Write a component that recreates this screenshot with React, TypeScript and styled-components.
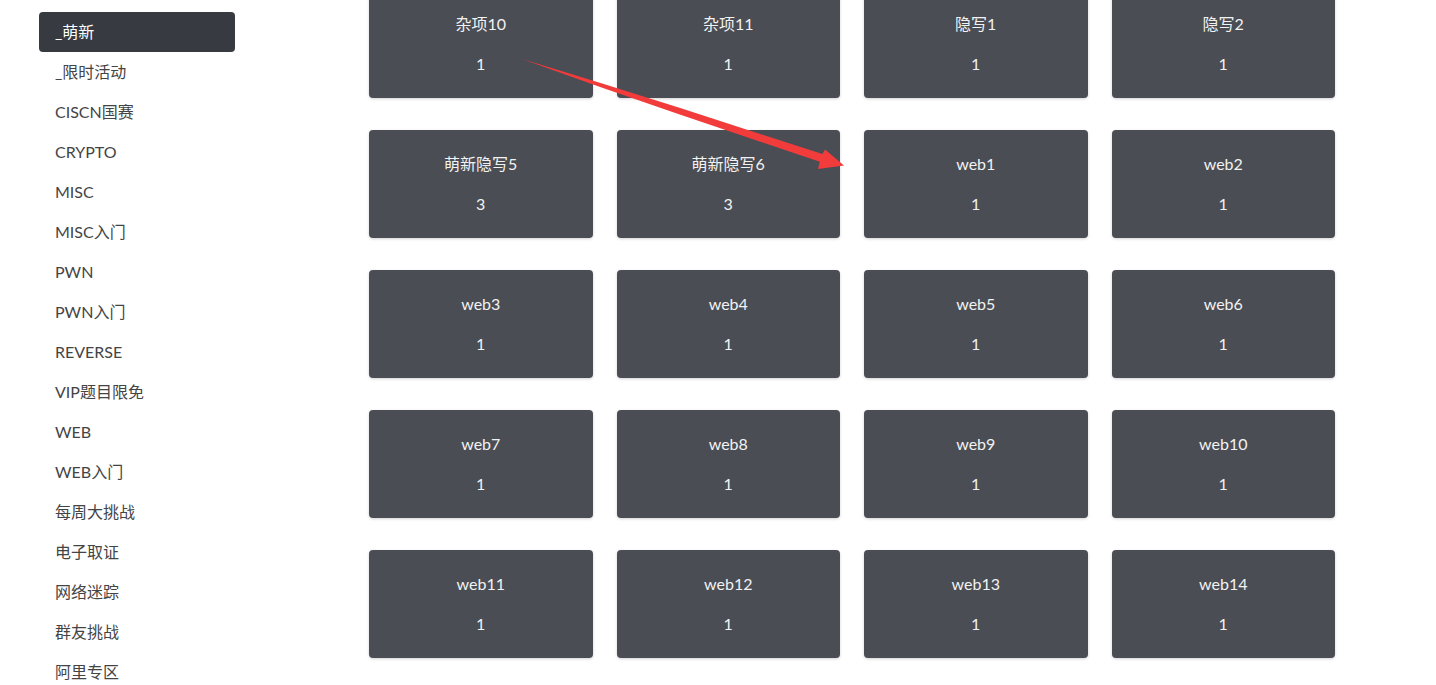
import styled, { createGlobalStyle } from 'styled-components';

const GlobalStyle = createGlobalStyle`
  html, body {
    margin: 0;
    padding: 0;
    background: #fff;
    overflow: hidden;
  }
  body {
    font-family: Lato, "Noto Sans CJK SC", sans-serif;
  }
`;

const Page = styled.div`
  position: relative;
  display: flex;
  align-items: flex-start;
  height: 685px;
  overflow: hidden;
`;

const Sidebar = styled.nav`
  display: flex;
  flex-direction: column;
  width: 196px;
  margin: 12px 0 0 39px;
  flex-shrink: 0;
`;

const NavItem = styled.div<{ $active?: boolean }>`
  height: 40px;
  line-height: 40px;
  padding-left: 16px;
  border-radius: 4px;
  font-size: 16px;
  color: ${(p) => (p.$active ? '#fff' : '#444')};
  background: ${(p) => (p.$active ? '#373a41' : 'transparent')};
  white-space: nowrap;
`;

const Grid = styled.div`
  display: grid;
  grid-template-columns: repeat(4, 223.5px);
  column-gap: 24px;
  row-gap: 32px;
  margin: -10px 0 0 134px;
`;

const Card = styled.div`
  height: 108px;
  background: #4a4d54;
  border-radius: 4px;
  box-shadow: 0 1px 3px rgba(0, 0, 0, 0.18);
  color: #f2f2f2;
  display: flex;
  flex-direction: column;
  align-items: center;
  font-size: 16px;
`;

const CardTitle = styled.div`
  margin-top: 24px;
  line-height: 20px;
`;

const CardScore = styled.div`
  margin-top: 20px;
  line-height: 20px;
`;

const Annotation = styled.svg`
  position: absolute;
  left: 0;
  top: 0;
  pointer-events: none;
`;

const categories = [
  '_萌新',
  '_限时活动',
  'CISCN国赛',
  'CRYPTO',
  'MISC',
  'MISC入门',
  'PWN',
  'PWN入门',
  'REVERSE',
  'VIP题目限免',
  'WEB',
  'WEB入门',
  '每周大挑战',
  '电子取证',
  '网络迷踪',
  '群友挑战',
  '阿里专区',
];

const challenges: [string, number][] = [
  ['杂项10', 1],
  ['杂项11', 1],
  ['隐写1', 1],
  ['隐写2', 1],
  ['萌新隐写5', 3],
  ['萌新隐写6', 3],
  ['web1', 1],
  ['web2', 1],
  ['web3', 1],
  ['web4', 1],
  ['web5', 1],
  ['web6', 1],
  ['web7', 1],
  ['web8', 1],
  ['web9', 1],
  ['web10', 1],
  ['web11', 1],
  ['web12', 1],
  ['web13', 1],
  ['web14', 1],
];

export default function App() {
  return (
    <Page>
      <GlobalStyle />
      <Sidebar>
        {categories.map((c, i) => (
          <NavItem key={c} $active={i === 0}>
            {c}
          </NavItem>
        ))}
      </Sidebar>
      <Grid>
        {challenges.map(([name, score]) => (
          <Card key={name}>
            <CardTitle>{name}</CardTitle>
            <CardScore>{score}</CardScore>
          </Card>
        ))}
      </Grid>
      {/* red arrow annotation over the page */}
      <Annotation width="1436" height="685" viewBox="0 0 1436 685">
        <polygon
          points="522,59 600.6,82.9 681,108.3 822.4,154.1 825,149.5 844,165.5 818,169 819.8,161.7 679,114.3 599.4,86.7"
          fill="#f23b3b"
        />
      </Annotation>
    </Page>
  );
}
